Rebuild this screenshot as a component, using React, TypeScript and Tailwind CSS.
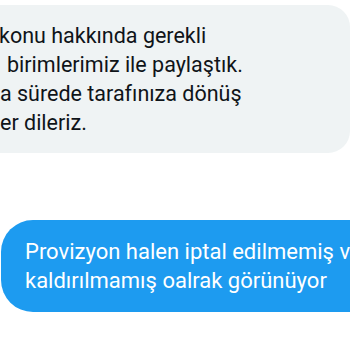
export default function App() {
  const f = { fontFamily: 'Roboto, "Liberation Sans", sans-serif' };
  return (
    <div className="w-[350px] h-[350px] bg-white overflow-hidden flex flex-col" style={f}>
      <div className="mt-[5px] w-[350px] h-[148px] bg-[#eff3f4] rounded-r-[22px] pt-[16px] text-[21.5px] leading-[29px] text-[#0f1419]">
        <div className="whitespace-nowrap ml-[-1px]">konu hakkında gerekli</div>
        <div className="whitespace-nowrap ml-[7px]">birimlerimiz ile paylaştık.</div>
        <div className="whitespace-nowrap ml-[0px]">a sürede tarafınıza dönüş</div>
        <div className="whitespace-nowrap ml-[0px]">er dileriz.</div>
      </div>
      <div className="mt-[67px] ml-[1px] w-[400px] h-[92px] bg-[#1d9bf0] rounded-l-[32px] pl-[24px] pt-[17px] text-[22px] leading-[29px] text-white">
        <div className="whitespace-nowrap">Provizyon halen iptal edilmemiş ve</div>
        <div className="whitespace-nowrap">kaldırılmamış oalrak görünüyor</div>
      </div>
    </div>
  );
}
